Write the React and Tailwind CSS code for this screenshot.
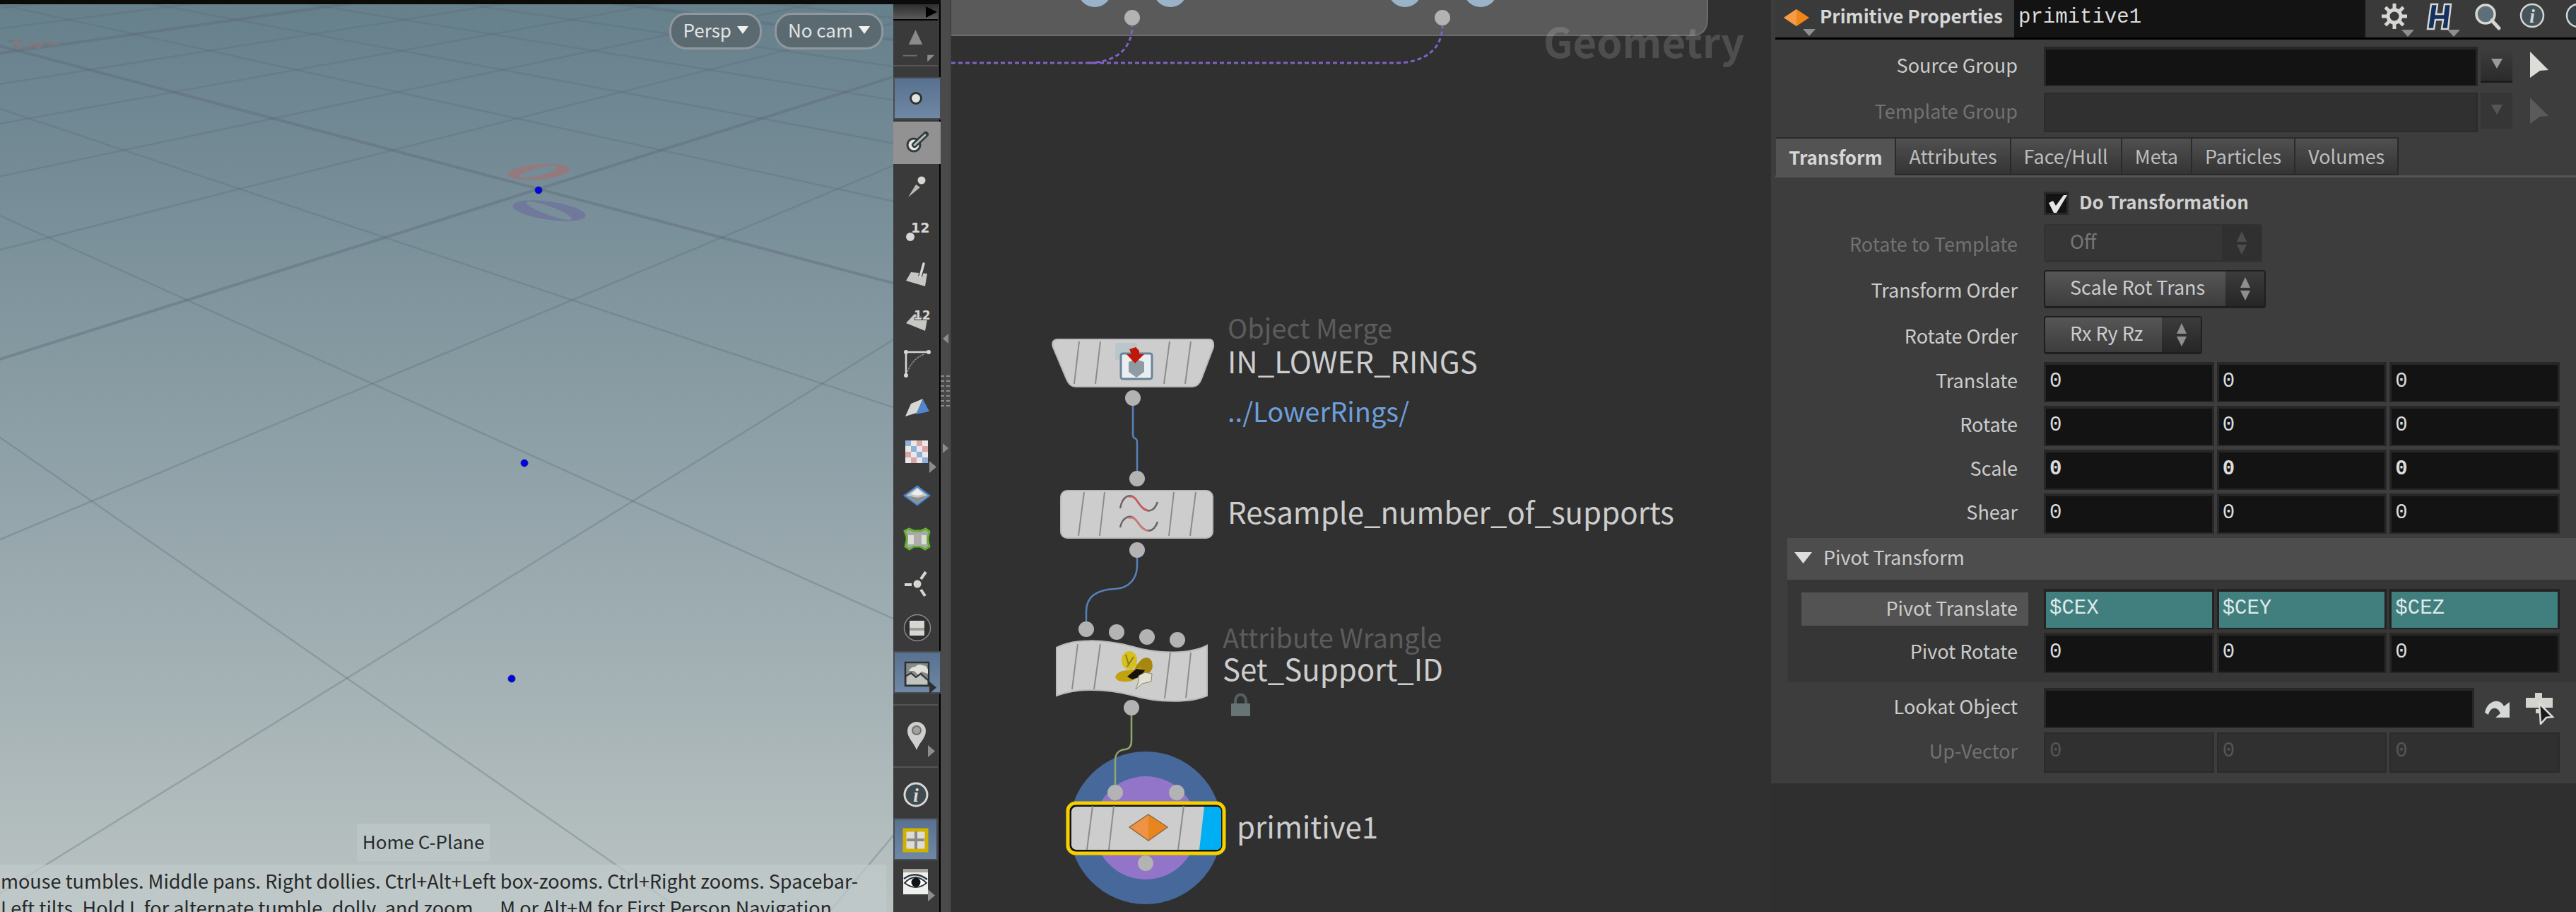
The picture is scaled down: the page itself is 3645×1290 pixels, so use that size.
import React from "react";

/* ---------- 3D viewport ---------- */

const HORIZON = 8.94;

// Projects a point of the ground plane (a, b in grid units) to the screen.
function project(a, b) {
  const s = a + b;
  const d = a - b;
  const w = HORIZON - s;
  return [
    ((8412 - 738 * s + 2334 * d) / w) * 0.81,
    (11853 / w - 676) * 0.4113,
  ];
}

function gridLines() {
  const lines = [];
  for (let k = -14; k <= 8; k++) {
    const near = HORIZON - 0.5 - k;
    const [ax, ay] = project(k, -40);
    const [bx, by] = project(k, near);
    const [cx, cy] = project(-40, k);
    const [dx, dy] = project(near, k);
    const heavy = k % 5 === 0;
    lines.push({ id: `a${k}`, heavy, x1: ax, y1: ay, x2: bx, y2: by });
    lines.push({ id: `b${k}`, heavy, x1: cx, y1: cy, x2: dx, y2: dy });
  }
  return lines;
}

const POINTS = [
  [762, 269],
  [742, 655],
  [724, 960],
];

function PillButton({ children }) {
  return (
    <button className="flex h-[52px] items-center gap-2 rounded-[24px] border-[3px] border-[#8f989d] bg-[#5b6a71] px-4 pb-1 text-[26px] leading-[40px] text-[#e2e4e5]">
      {children}
      <svg width="16" height="12" viewBox="0 0 16 12" aria-hidden="true">
        <path d="M0 1h16L8 12z" fill="#f0f0f0" />
      </svg>
    </button>
  );
}

function Viewport() {
  return (
    <section
      aria-label="Scene view"
      className="relative overflow-hidden bg-linear-to-b from-[#66808c] via-[#8fa1a8] to-[#bac3c2]"
    >
      <svg
        className="absolute inset-0 h-full w-full"
        viewBox="0 6 1264 1284"
        preserveAspectRatio="xMinYMin slice"
        aria-hidden="true"
      >
        {gridLines().map((l) => (
          <line
            key={l.id}
            x1={l.x1}
            y1={l.y1}
            x2={l.x2}
            y2={l.y2}
            stroke={l.heavy ? "rgba(92,105,120,.42)" : "rgba(92,105,120,.32)"}
            strokeWidth={l.heavy ? 4 : 2.5}
          />
        ))}
        <mask id="red-hole">
          <rect x="700" y="200" width="200" height="130" fill="#fff" />
          <ellipse cx="762" cy="243" rx="28" ry="5.500" fill="#000" transform="rotate(-10 762 243)" />
        </mask>
        <mask id="blue-hole">
          <rect x="700" y="200" width="200" height="130" fill="#fff" />
          <ellipse cx="777" cy="298" rx="34" ry="6" fill="#000" transform="rotate(12 777 298)" />
        </mask>
        <ellipse cx="762" cy="243" rx="44" ry="11" fill="#94797d" mask="url(#red-hole)" transform="rotate(-5 762 243)" />
        <ellipse cx="777" cy="298" rx="52" ry="13" fill="#70799c" mask="url(#blue-hole)" transform="rotate(8 777 298)" />
        <g fill="none" strokeWidth="4" strokeLinecap="round">
          <path d="M13 58h17M20 66l18 2 16-4M60 62l24 1" stroke="#6f787f" />
          <path d="M20 59h8M22 67h8M44 63h14l-4 5M68 60l12 2" stroke="#83767b" />
        </g>
        {POINTS.map(([x, y]) => (
          <circle key={y} cx={x} cy={y} r="5" fill="#0000ee" stroke="#1c2a70" strokeWidth="1" />
        ))}
      </svg>

      <div className="relative flex h-full flex-col justify-between">
        <div className="flex justify-end gap-[18px] pt-3 pr-3.5">
          <PillButton>Persp</PillButton>
          <PillButton>No cam</PillButton>
        </div>
        <div className="pr-[10px] text-[27px] leading-[38px] text-[#26292a]">
          <div className="mx-auto mb-[5px] flex h-[53px] w-fit items-center bg-[#c2caca]/60 px-[8px] pb-1 text-[26px] translate-x-[-28px]">
            Home C-Plane
          </div>
          <div className="h-[67px] overflow-hidden bg-[#c2caca]/70 pt-[4px] pl-px whitespace-pre">
            <p>mouse tumbles. Middle pans. Right dollies. Ctrl+Alt+Left box-zooms. Ctrl+Right zooms. Spacebar-</p>
            <p>Left tilts. Hold L for alternate tumble, dolly, and zoom.     M or Alt+M for First Person Navigation.</p>
          </div>
        </div>
      </div>
    </section>
  );
}

/* ---------- Display toolbar ---------- */

const STEEL = "#d6d6d2";

const CornerArrow = ({ y = 44, dark }) => (
  <path d={`M49 ${y}v17l10-8.500z`} fill={dark ? "#2f2f2f" : "#8d8d8d"} />
);

const CHECKS = [
  "#8fb0d8", "#e8e8e8", "#dba5a5", "#e8e8e8",
  "#e8e8e8", "#8fb0d8", "#e8e8e8", "#dba5a5",
  "#dba5a5", "#e8e8e8", "#8fb0d8", "#e8e8e8",
  "#e8e8e8", "#dba5a5", "#e8e8e8", "#8fb0d8",
];

const TOOLS = [
  {
    name: "Display points",
    state: "on",
    art: <circle cx="30" cy="31" r="7.500" fill="#e2e2de" stroke="#2c3439" strokeWidth="3" />,
  },
  {
    name: "Display point normals",
    state: "hover",
    art: (
      <g>
        <circle cx="27" cy="34" r="9" fill="#e6e6e2" stroke="#333c40" strokeWidth="3" />
        <path d="M28 34L44 19" stroke="#333c40" strokeWidth="8" strokeLinecap="round" />
        <path d="M28 34L43 20" stroke="#b4b8b8" strokeWidth="3" strokeLinecap="round" />
      </g>
    ),
  },
  {
    name: "Display point trails",
    art: (
      <g fill={STEEL}>
        <circle cx="38" cy="22" r="5.500" />
        <path d="M19 46L30 28l6 4z" fill="#b9b9b5" />
      </g>
    ),
  },
  {
    name: "Display point numbers",
    art: (
      <g fill={STEEL}>
        <circle cx="22" cy="40" r="6" />
        <text x="23" y="34" fontSize="19" fontWeight="700" className="font-['DejaVu_Sans']">12</text>
      </g>
    ),
  },
  {
    name: "Display primitive normals",
    art: (
      <g>
        <path d="M16 39L23 27l23 2-3 18z" fill="#c6c6c2" />
        <path d="M41 15L36 33" stroke="#3a3a3a" strokeWidth="6" />
        <path d="M41 15L36 33" stroke={STEEL} strokeWidth="3.500" strokeLinecap="round" />
      </g>
    ),
  },
  {
    name: "Display primitive numbers",
    art: (
      <g>
        <path d="M16 37L28 24l18 8-3 16z" fill="#c6c6c2" />
        <text x="27" y="32" fontSize="17" fontWeight="700" fill={STEEL} stroke="#3a3a3a" strokeWidth="2" paintOrder="stroke" className="font-['DejaVu_Sans']">12</text>
      </g>
    ),
  },
  {
    name: "Display profile curves",
    art: (
      <g fill="none" stroke={STEEL} strokeWidth="2.500">
        <path d="M16 48V15h32" />
        <path d="M18 43C22 32 30 22 42 18" stroke="#8f9492" strokeWidth="1.500" strokeDasharray="3 1" />
        <g fill={STEEL} stroke="none">
          <circle cx="16" cy="15" r="3" />
          <circle cx="48" cy="15" r="3" />
          <circle cx="16" cy="48" r="3" />
        </g>
      </g>
    ),
  },
  {
    name: "Display primitive hulls",
    art: (
      <g>
        <path d="M40 20l9 17-19 4z" fill="#4f86cf" />
        <path d="M15 44l8-18 17-7-9 20z" fill={STEEL} />
      </g>
    ),
  },
  {
    name: "Display UV texture",
    art: (
      <g>
        {CHECKS.map((c, i) => (
          <rect key={i} x={15 + (i % 4) * 8} y={15 + Math.floor(i / 4) * 8} width="8" height="8" fill={c} />
        ))}
        <CornerArrow />
      </g>
    ),
  },
  {
    name: "Display shaded",
    art: (
      <g>
        <path d="M14 31L32 18l17 13-17 13z" fill="#c4c4c0" stroke="#4a86cc" strokeWidth="2.500" />
        <path d="M17 31l15 11 14-11-14 3z" fill="#8e8e8a" />
        <path d="M23 29L32 21l9 8-9 2z" fill="#ececea" />
      </g>
    ),
  },
  {
    name: "Display subdivision surfaces",
    art: (
      <g>
        <path d="M14 19l6-3 7 3h10l7-3 5 4-2 8v6l2 7-6 4-7-4h-9l-6 4-6-4 2-8v-6z" fill="#a9aaa6" stroke="#62b22f" strokeWidth="3" strokeLinejoin="round" />
        <path d="M27 23h11v17H27z" fill="#acaca8" />
        <path d="M19 25h8v13h-8zM38 25h7v13h-7z" fill="#dcdcd8" />
      </g>
    ),
  },
  {
    name: "Display vertex markers",
    art: (
      <g stroke={STEEL} strokeWidth="4" fill={STEEL}>
        <path d="M14 32h10M37 24l7-10M37 39l6 9" />
        <circle cx="32" cy="31" r="5.500" stroke="none" />
      </g>
    ),
  },
  {
    name: "Display object names",
    art: (
      <g>
        <circle cx="32" cy="31" r="18.500" fill="#303030" stroke="#8b8b8b" strokeWidth="1.500" />
        <path d="M21 21h21v21H21z" fill={STEEL} />
        <path d="M21 31h21v4H21z" fill="#9d9d99" />
      </g>
    ),
  },
  {
    name: "Display background images",
    state: "on",
    art: (
      <g>
        <path d="M15 17h33v33H15z" fill="#868b89" stroke="#2c3236" strokeWidth="2.500" />
        <path d="M20 29q3-6 9-6 5-5 10-2 6 0 8 6v6l-9-3-5 4-6-5z" fill="#dededa" />
        <path d="M17 48V38l7-5 6 5 5-4 11 9v5z" fill="#c2c4c0" />
        <path d="M16 36l7-4 7 6 7-5 10 9" fill="none" stroke="#2c3236" strokeWidth="2" />
        <CornerArrow y={44} dark />
      </g>
    ),
  },
];

function ToolButton({ tool, className = "" }) {
  const face =
    tool.state === "on"
      ? "border-2 border-[#484c50] bg-linear-to-b from-[#587190] to-[#6f88a5]"
      : tool.state === "hover"
        ? "bg-[#929292]"
        : "";
  return (
    <button aria-label={tool.name} className={`flex items-center justify-center ${className}`}>
      <span className={`flex h-full max-h-[60px] w-full items-center justify-center ${face}`}>
        <svg width="64" height="62" viewBox="0 0 64 62" className="shrink-0" aria-hidden="true">
          {tool.art}
        </svg>
      </span>
    </button>
  );
}

const PIN = {
  name: "Pin view",
  art: (
    <g>
      <path d="M33 51C29 40 20 34 20 24a13 13 0 0 1 26 0c0 10-9 16-13 27z" fill="#cfcfcd" />
      <circle cx="33" cy="23" r="6" fill="#a2a2a0" stroke="#6f6f6f" strokeWidth="2" />
      <CornerArrow />
    </g>
  ),
};
const INFO = {
  name: "Display information",
  art: (
    <g>
      <circle cx="32" cy="33" r="16" fill="#3f4b50" stroke="#d8d8d8" strokeWidth="3" />
      <text x="32" y="43" textAnchor="middle" fontSize="27" fontStyle="italic" fontWeight="700" fill="#dcdcdc" className="font-['Liberation_Serif']">i</text>
    </g>
  ),
};
const LAYOUT = {
  name: "Display grid",
  state: "on",
  art: (
    <g>
      <path d="M16 18h31v29H16z" fill="#dddcd8" stroke="#d1b100" strokeWidth="5" />
      <path d="M32 20v25M19 32h25" stroke="#8a8c84" strokeWidth="4" />
    </g>
  ),
};
const EYE = {
  name: "Display options",
  art: (
    <g>
      <path d="M14 13h35v36H14z" fill="#efefed" />
      <path d="M14 13h35v5H14z" fill="#a8a69c" />
      <path d="M16 33q15-16 31 0-15 12-31 0z" fill="#fff" stroke="#2e3a40" strokeWidth="2" />
      <path d="M15 27q16-12 33 1" fill="none" stroke="#2e3a40" strokeWidth="2.500" />
      <circle cx="32" cy="32" r="6.500" fill="#111" />
      <CornerArrow y={42} />
    </g>
  ),
};

function Toolbar() {
  return (
    <nav aria-label="Display options" className="flex flex-col border-r-2 border-black bg-[#3a3a3a] pr-0.5">
      <button aria-label="Expand" className="flex h-[23px] items-center justify-end border-b-2 border-black bg-linear-to-b from-[#2e2e2e] to-[#5a5a5a]">
        <svg width="18" height="16" viewBox="0 0 18 16" aria-hidden="true"><path d="M1 0l16 8L1 16z" fill="#000" /></svg>
      </button>
      <button aria-label="Scroll up" className="flex h-[65px] items-start border-b-2 border-[#555]">
        <svg width="64" height="62" viewBox="0 0 64 62" aria-hidden="true">
          <path d="M32 13l10 21H22z" fill="#8b8b8b" />
          <path d="M14 50h20" stroke="#6a6a6a" strokeWidth="2" />
          <path d="M49 49h10L49 59z" fill="#8b8b8b" />
        </svg>
      </button>
      <div className="mt-[14px] grid h-[874px] auto-rows-fr">
        {TOOLS.map((t) => <ToolButton key={t.name} tool={t} />)}
      </div>
      <div className="mt-[14px] h-[2px] bg-[#555]" />
      <ToolButton tool={PIN} className="h-[86px]" />
      <div className="h-[2px] bg-[#555]" />
      <ToolButton tool={INFO} className="h-[71px]" />
      <ToolButton tool={LAYOUT} className="h-[60px]" />
      <ToolButton tool={EYE} className="h-[60px]" />
    </nav>
  );
}

function Splitter() {
  return (
    <div className="flex flex-col items-center border-r border-[#3a3a3a] bg-[#4a4a4a] pt-[472px]">
      <svg width="14" height="170" viewBox="0 0 14 170" aria-hidden="true">
        <path d="M11 0v14L3 7zM3 155v14l8-7z" fill="#8b8b8b" />
        {[0, 1, 2, 3, 4, 5, 6].map((i) => (
          <path key={i} d={`M0 ${60 + i * 7}h5M8 ${60 + i * 7}h5`} stroke="#8b8b8b" strokeWidth="2" />
        ))}
      </svg>
    </div>
  );
}

/* ---------- Network editor ---------- */

const PORTS = [
  [1602, 25], [2041, 25],
  [1603, 563], [1609, 677], [1609, 778],
  [1537, 890], [1580, 894], [1623, 901], [1666, 905], [1601, 1001],
  [1578, 1121], [1665, 1121], [1621, 1221],
];

const STRIPES = [
  "M1527 483l-7 60M1557 483l-7 60M1655 483l-8 60M1685 483l-8 60",
  "M1534 696l-8 62M1563 696l-7 62M1661 696l-7 62M1692 696l-8 62",
  "M1525 911l-8 64M1557 911l-9 64M1656 923l-8 65M1685 923l-7 64",
  "M1546 1140l-8 62M1576 1140l-7 62M1675 1140l-8 62",
];

function NodeLabel({ className, children }) {
  return <span className={`absolute leading-[42px] whitespace-nowrap ${className}`}>{children}</span>;
}

function Network() {
  return (
    <section aria-label="Network editor" className="relative overflow-hidden bg-[#303030]">
      <svg
        className="absolute inset-0 h-full w-full"
        viewBox="1346 0 1160 1290"
        preserveAspectRatio="xMinYMin slice"
        aria-hidden="true"
      >
        <path d="M1340-10H2416V26q0 24-22 24H1340z" fill="#5a5a5a" stroke="#6b6b6b" strokeWidth="2" />
        <g fill="#9ab3c8">
          <circle cx="1549" cy="-14" r="24" />
          <circle cx="1656" cy="-14" r="24" />
          <circle cx="1988" cy="-14" r="24" />
          <circle cx="2095" cy="-14" r="24" />
        </g>
        <g fill="none" stroke="#7f62c4" strokeWidth="3" strokeDasharray="6 4">
          <path d="M1346 89H1975C2015 89 2041 70 2041 36" />
          <path d="M1540 89C1578 88 1602 70 1602 36" />
        </g>

        <circle cx="1621" cy="1171" r="108" fill="#46689a" />
        <circle cx="1621" cy="1171" r="73" fill="#9275c9" />

        <g fill="none" strokeWidth="2.500">
          <path d="M1603 570V614q0 5 3 6t3 6V670" stroke="#5682b8" />
          <path d="M1609 785V800C1609 818 1598 832 1578 833C1550 834 1537 845 1537 865V885" stroke="#5682b8" />
          <path d="M1601 1008V1048q0 11-9 12c-10 1-14 6-14 16V1115" stroke="#8fa86c" />
        </g>
        {PORTS.map(([x, y]) => (
          <circle key={`${x}-${y}`} cx={x} cy={y} r="11" fill="#b3b3b3" />
        ))}

        <g fill="#cdcdcd" stroke="#bababa" strokeWidth="2">
          <path d="M1496 480H1712q6 1 5 11L1700 536q-4 11-13 11H1522q-9 0-13-11L1490 491q-3-10 6-11z" />
          <rect x="1501" y="694" width="215" height="67" rx="9" />
          <path d="M1495 916C1520 903 1560 904 1600 914C1640 926 1685 925 1708 913V984C1685 994 1640 995 1600 983C1560 973 1520 974 1495 984z" />
        </g>
        <rect x="1511" y="1136" width="221" height="71" rx="11" fill="#111" stroke="#f5cf00" strokeWidth="5" />
        <rect x="1516" y="1141" width="212" height="61" rx="7" fill="#cdcdcd" />
        <path d="M1704 1141H1720q8 0 8 8V1194q0 8-8 8H1697z" fill="#00aef3" />
        <g fill="none" stroke="#8c8c8c" strokeWidth="2">
          {STRIPES.map((d) => <path key={d} d={d} />)}
        </g>

        {/* object merge */}
        <rect x="1578" y="485" width="31" height="24" fill="#b9c7cb" />
        <rect x="1586" y="500" width="44" height="36" rx="3" fill="#e9eff1" stroke="#6b8497" strokeWidth="3" />
        <path d="M1597 512l10-4 12 4v14l-11 8-11-8z" fill="#8f9ba2" />
        <path d="M1598 494l9-3 5 5v5h7l-13 13-12-13h7z" fill="#c01808" />

        {/* resample */}
        <g fill="none" strokeWidth="2.500">
          <path d="M1585 719C1588 702 1600 694 1610 710C1622 729 1633 724 1638 710" stroke="#6e6262" />
          <path d="M1597 703q7-3 13 7t14 12" stroke="#cf5a5a" />
          <path d="M1585 746C1588 732 1600 724 1610 739C1622 757 1633 752 1638 738" stroke="#6e6262" />
          <path d="M1597 733q7-3 13 6t14 12" stroke="#cf7a7a" />
        </g>

        {/* wrangle */}
        <ellipse cx="1598" cy="934" rx="11" ry="13" fill="#d6c01c" />
        <path d="M1608 941l8-9q10-5 14 4 3 12-5 16l-12 4-11-3z" fill="#a8870e" />
        <path d="M1578 957q4-9 20-9l18-4-6 14q-10 8-22 6-9-1-10-7z" fill="#c2a20f" />
        <path d="M1595 957l13-11 12 2-6 9-12 4z" fill="#15130a" />
        <path d="M1611 956l9-5 10 2-1 11-13 3-9 8 4-11z" fill="#e2e1d2" stroke="#8a876c" strokeWidth="1" />
        <path d="M1593 926l4 14M1604 929l-9 14" stroke="#8a7d20" strokeWidth="2" />

        {/* primitive */}
        <path d="M1625 1152l27 18-27 19-27-19z" fill="#e8851f" stroke="#8f6b48" strokeWidth="1.500" />
        <path d="M1625 1153v35l-25-18z" fill="#ee9345" />

        {/* lock */}
        <path d="M1748 996v-5a7.500 8.500 0 0 1 15 0v5" fill="none" stroke="#53605f" strokeWidth="4" />
        <rect x="1742" y="995" width="27" height="18" rx="1" fill="#667573" />
      </svg>

      <NodeLabel className="top-[36px] left-[838px] text-[58px] font-bold text-white/15">Geometry</NodeLabel>
      <NodeLabel className="top-[442px] left-[391px] text-[38px] text-[#5c5c5c]">Object Merge</NodeLabel>
      <NodeLabel className="top-[489px] left-[391px] text-[42px] text-[#cdcdcd]">IN_LOWER_RINGS</NodeLabel>
      <NodeLabel className="top-[560px] left-[391px] text-[38px] text-[#6d9fdc]">../LowerRings/</NodeLabel>
      <NodeLabel className="top-[702px] left-[391px] text-[42px] text-[#cdcdcd]">Resample_number_of_supports</NodeLabel>
      <NodeLabel className="top-[880px] left-[384px] text-[38px] text-[#5c5c5c]">Attribute Wrangle</NodeLabel>
      <NodeLabel className="top-[924px] left-[384px] text-[42px] text-[#cdcdcd]">Set_Support_ID</NodeLabel>
      <NodeLabel className="top-[1147px] left-[404px] text-[42px] text-[#cdcdcd]">primitive1</NodeLabel>
    </section>
  );
}

/* ---------- Parameter panel ---------- */

const FIELD =
  "block h-full w-full min-w-0 border-x-[3px] border-t-4 border-b-2 border-[#272727] bg-[#131313] px-[5px] pb-1 font-['Liberation_Mono',monospace] text-[29px] text-[#dcdcdc] outline-none";
const FIELD_OFF =
  "block h-full w-full min-w-0 border-2 border-[#2b2b2b] bg-[#303030] px-[6px] pb-1 font-['Liberation_Mono',monospace] text-[29px] text-[#555] outline-none";
const FIELD_EXPR =
  "block h-full w-full min-w-0 border-x-[3px] border-t-4 border-b-2 border-[#232323] bg-[#417f7f] px-[5px] pb-1 font-['Liberation_Mono',monospace] text-[29px] text-[#dfe9e9] outline-none";

function Row({ id, label, off, children, className = "h-[57px]", labelClass = "leading-[52px]" }) {
  return (
    <div className={`flex gap-[37px] pr-[23px] ${className}`}>
      <label htmlFor={id} className={`w-[349px] shrink-0 text-right ${labelClass} ${off ? "text-[#727272]" : "text-[#cccccc]"}`}>
        {label}
      </label>
      {children}
    </div>
  );
}

function Vector({ id, label, values, off, strong, expr, labelClass }) {
  const look = off ? FIELD_OFF : expr ? FIELD_EXPR : FIELD;
  return (
    <Row id={id} label={label} off={off} labelClass={labelClass}>
      <div className="grid flex-1 grid-cols-3 gap-1">
        {values.map((v, i) => (
          <input
            key={i}
            id={i === 0 ? id : undefined}
            aria-label={i === 0 ? undefined : `${label} ${i + 1}`}
            defaultValue={v}
            disabled={off}
            className={`${look} ${strong ? "font-bold" : ""}`}
          />
        ))}
      </div>
    </Row>
  );
}

function Choice({ id, options, off, width }) {
  return (
    <span className={`relative block ${width} h-[54px] rounded-sm border-t-2 border-r-2 border-b-[3px] border-l-2 ${off ? "border-[#323232] bg-[#363636]" : "border-[#1f1f1f] bg-linear-to-b from-[#565656] to-[#3d3d3d]"}`}>
      <select
        id={id}
        disabled={off}
        className={`h-full w-full appearance-none bg-transparent pb-1 pl-[35px] opacity-100 outline-none ${off ? "text-[#777]" : "text-[#cccccc]"}`}
      >
        {options.map((o) => <option key={o}>{o}</option>)}
      </select>
      <span className={`pointer-events-none absolute inset-y-0 right-0 flex w-[55px] items-center justify-center ${off ? "bg-[#303030]" : "bg-linear-to-b from-[#3c3c3c] to-[#262626]"}`}>
        <svg width="16" height="36" viewBox="0 0 16 36" aria-hidden="true">
          <path d="M8 1l7 15H1zM1 20h14L8 34z" fill={off ? "#4d4d4d" : "#8f8f8f"} />
        </svg>
      </span>
    </span>
  );
}

function GroupField({ id, label, off }) {
  return (
    <Row id={id} label={label} off={off} className="h-[56px]">
      <input id={id} disabled={off} defaultValue="" className={off ? FIELD_OFF : FIELD} />
      <div className="-ml-[33px] flex shrink-0 items-start">
        <button
          aria-label={`${label} list`}
          disabled={off}
          className={`flex h-[51px] w-[45px] items-center justify-center border-b-[3px] ${off ? "border-[#363636] bg-[#363636]" : "border-[#1c1c1c] bg-linear-to-b from-[#3e3e3e] to-[#2b2b2b]"}`}
        >
          <svg width="16" height="14" viewBox="0 0 16 14" aria-hidden="true">
            <path d="M0 0h16L8 14z" fill={off ? "#565656" : "#999"} />
          </svg>
        </button>
        <button aria-label={`Select ${label}`} disabled={off} className="ml-[24px] flex h-[51px] w-[43px] items-center">
          <svg width="28" height="40" viewBox="0 0 28 40" aria-hidden="true">
            <path d="M1 1l26 26-12 1L1 38z" fill={off ? "#5a5a5a" : "#dcdcd8"} />
          </svg>
        </button>
      </div>
    </Row>
  );
}

const GEAR_TEETH = [0, 45, 90, 135, 180, 225, 270, 315];

function HeaderIcons() {
  return (
    <div className="flex shrink-0 text-[#d6d6d2]">
      <button aria-label="Parameter options" className="w-[65px]">
        <svg width="65" height="52" viewBox="0 0 65 52" aria-hidden="true">
          <g fill="none" stroke="currentColor">
            <circle cx="28" cy="22" r="9" strokeWidth="5" />
            {GEAR_TEETH.map((a) => (
              <path key={a} d="M28 12V4" strokeWidth="5" transform={`rotate(${a} 28 22)`} />
            ))}
          </g>
          <path d="M38 41h18l-9 10z" fill="#8f8f8f" />
        </svg>
      </button>
      <button aria-label="Houdini help" className="w-[65px]">
        <svg width="65" height="52" viewBox="0 0 65 52" aria-hidden="true">
          <path d="M15 5h9l-2 14h10l2-14h9l-4 35h-9l2-13H21l-2 13h-9z" fill="#14305e" stroke="currentColor" strokeWidth="2.500" />
          <path d="M38 41h18l-9 10z" fill="#8f8f8f" />
        </svg>
      </button>
      <button aria-label="Search parameters" className="w-[65px]">
        <svg width="65" height="52" viewBox="0 0 65 52" aria-hidden="true">
          <circle cx="27" cy="19" r="13" fill="#5d7079" stroke="currentColor" strokeWidth="3.500" />
          <path d="M36 28l10 11" stroke="currentColor" strokeWidth="5" strokeLinecap="round" />
        </svg>
      </button>
      <button aria-label="Information" className="w-[65px]">
        <svg width="65" height="52" viewBox="0 0 65 52" aria-hidden="true">
          <circle cx="28" cy="21" r="16" fill="#45545b" stroke="currentColor" strokeWidth="2.500" />
          <text x="28" y="31" textAnchor="middle" fontSize="27" fontStyle="italic" fontWeight="700" fill="currentColor" className="font-['Liberation_Serif']">i</text>
        </svg>
      </button>
      <button aria-label="Help" className="w-[25px] overflow-hidden">
        <svg width="65" height="52" viewBox="0 0 65 52" className="max-w-none" aria-hidden="true">
          <circle cx="28" cy="21" r="16" fill="#33434b" stroke="currentColor" strokeWidth="2.500" />
        </svg>
      </button>
    </div>
  );
}

function Properties() {
  return (
    <section aria-label="Parameters" className="min-w-0 overflow-hidden bg-[#2f2f2f]">
      <div className="bg-[#3d3d3d] pb-[15px] text-[27px]">
        <header className="ml-[6px] flex h-[56px] items-stretch border-b-[3px] border-black bg-[#3a3a3a]">
          <svg width="60" height="53" viewBox="0 0 60 53" className="shrink-0" aria-hidden="true">
            <path d="M30 13l18 12-18 12-18-12z" fill="#f0851c" />
            <path d="M30 13v24L12 25z" fill="#f59a45" />
            <path d="M39 41h18l-9 10z" fill="#8f8f8f" />
          </svg>
          <label htmlFor="node-name" className="w-[278px] shrink-0 pl-[3px] text-[26px] leading-[44px] font-bold whitespace-nowrap text-[#d6d6d6]">
            Primitive Properties
          </label>
          <input
            id="node-name"
            defaultValue="primitive1"
            className="mr-[12px] min-w-0 flex-1 border-r-2 border-[#2a2a2a] bg-[#131313] pb-1 pl-[6px] font-['Liberation_Mono',monospace] text-[29px] text-[#dcdcdc] outline-none"
          />
          <HeaderIcons />
        </header>

        <div className="flex flex-col gap-[9px] pt-[10px]">
          <GroupField id="source-group" label="Source Group" />
          <GroupField id="template-group" label="Template Group" off />
        </div>

        <div role="tablist" className="mt-[7px] ml-[6px] flex h-[57px] border-b-[3px] border-[#555] pl-px">
          <button role="tab" aria-selected="true" className="border-t-2 border-r-2 border-[#2a2a2a] bg-[#535353] px-[18px] pb-0.5 text-[26px] font-bold text-[#d6d6d6]">
            Transform
          </button>
          {["Attributes", "Face/Hull", "Meta", "Particles", "Volumes"].map((t) => (
            <button key={t} role="tab" aria-selected="false" className="border-t-2 border-r-2 border-b-2 border-[#2a2a2a] bg-linear-to-b from-[#505050] to-[#343434] px-[18px] text-[#bdbdbd]">
              {t}
            </button>
          ))}
        </div>

        <div className="mt-[20px] ml-[386px] flex h-[33px] items-center gap-[15px]">
          <span className="relative h-[33px] w-[35px]">
            <input id="do-transform" type="checkbox" defaultChecked className="h-full w-full appearance-none border-[3px] border-[#292929] bg-[#131313]" />
            <svg width="35" height="33" viewBox="0 0 35 33" className="pointer-events-none absolute inset-0" aria-hidden="true">
              <path d="M7 16l6-3 4 7L28 5h5L18 30h-4z" fill="#e6e6e6" />
            </svg>
          </span>
          <label htmlFor="do-transform" className="pb-1.5 text-[26px] font-bold text-[#d0d0d0]">Do Transformation</label>
        </div>

        <div className="mt-[13px] flex flex-col gap-[11px]">
          <Row id="rot-template" label="Rotate to Template" off className="h-[54px]" labelClass="leading-[55px]">
            <Choice id="rot-template" options={["Off"]} off width="w-[309px]" />
          </Row>
          <Row id="xform-order" label="Transform Order" className="h-[54px]" labelClass="leading-[55px]">
            <Choice id="xform-order" options={["Scale Rot Trans"]} width="w-[314px]" />
          </Row>
          <Row id="rot-order" label="Rotate Order" className="h-[54px]" labelClass="leading-[55px]">
            <Choice id="rot-order" options={["Rx Ry Rz"]} width="w-[224px]" />
          </Row>
        </div>

        <div className="mt-[11px] flex flex-col gap-[5px]">
          <Vector id="translate" label="Translate" values={["0", "0", "0"]} />
          <Vector id="rotate" label="Rotate" values={["0", "0", "0"]} />
          <Vector id="scale" label="Scale" values={["0", "0", "0"]} strong />
          <Vector id="shear" label="Shear" values={["0", "0", "0"]} />
        </div>

        <div className="mt-[6px] ml-[23px] bg-[#363636]">
          <button aria-expanded="true" className="flex h-[59px] w-full items-center gap-[16px] bg-[#4d4d4d] pb-1 pl-[10px] text-[#cccccc]">
            <svg width="25" height="16" viewBox="0 0 25 16" aria-hidden="true"><path d="M0 0h25L12.500 16z" fill="#dedede" /></svg>
            Pivot Transform
          </button>
          <div className="-ml-[23px] flex flex-col gap-[5px] py-[13px]">
            <Vector
              id="pivot-translate"
              label="Pivot Translate"
              values={["$CEX", "$CEY", "$CEZ"]}
              expr
              labelClass="my-[5px] -mr-[15px] ml-[43px] !w-[321px] bg-[#535353] pr-[15px] leading-[44px]"
            />
            <Vector id="pivot-rotate" label="Pivot Rotate" values={["0", "0", "0"]} />
          </div>
        </div>

        <div className="mt-[8px] flex flex-col gap-[6px]">
          <Row id="lookat" label="Lookat Object">
            <input id="lookat" defaultValue="" className={FIELD} />
            <div className="-mr-[10px] -ml-[25px] flex shrink-0 items-center">
              <button aria-label="Jump to object" className="w-[58px]">
                <svg width="42" height="30" viewBox="0 0 42 30" aria-hidden="true">
                  <path d="M3 21C6 4 24-1 30 12l8-6v22H18l7-6C21 12 11 12 8 24z" fill="#d4d8d6" />
                </svg>
              </button>
              <button aria-label="Choose object" className="w-[61px]">
                <svg width="44" height="46" viewBox="0 0 44 46" aria-hidden="true">
                  <path d="M16 1h10v7h15v14H3V8h13zM17 24h8v6h-8z" fill="#d4d4ce" />
                  <path d="M22 16l19 19-9 1-8 9z" fill="#1b1b1b" stroke="#dedede" strokeWidth="2.500" />
                </svg>
              </button>
            </div>
          </Row>
          <Vector id="up-vector" label="Up-Vector" values={["0", "0", "0"]} off />
        </div>
      </div>
    </section>
  );
}

export default function App() {
  return (
    <main className="grid h-screen grid-cols-[1264fr_67px_15px_1160fr_1139fr] overflow-hidden bg-black font-['Noto_Sans_CJK_SC',sans-serif]">
      <div className="col-span-2 grid grid-cols-subgrid border-t-[6px] border-[#0b0b0b]">
        <Viewport />
        <Toolbar />
      </div>
      <Splitter />
      <Network />
      <Properties />
    </main>
  );
}
